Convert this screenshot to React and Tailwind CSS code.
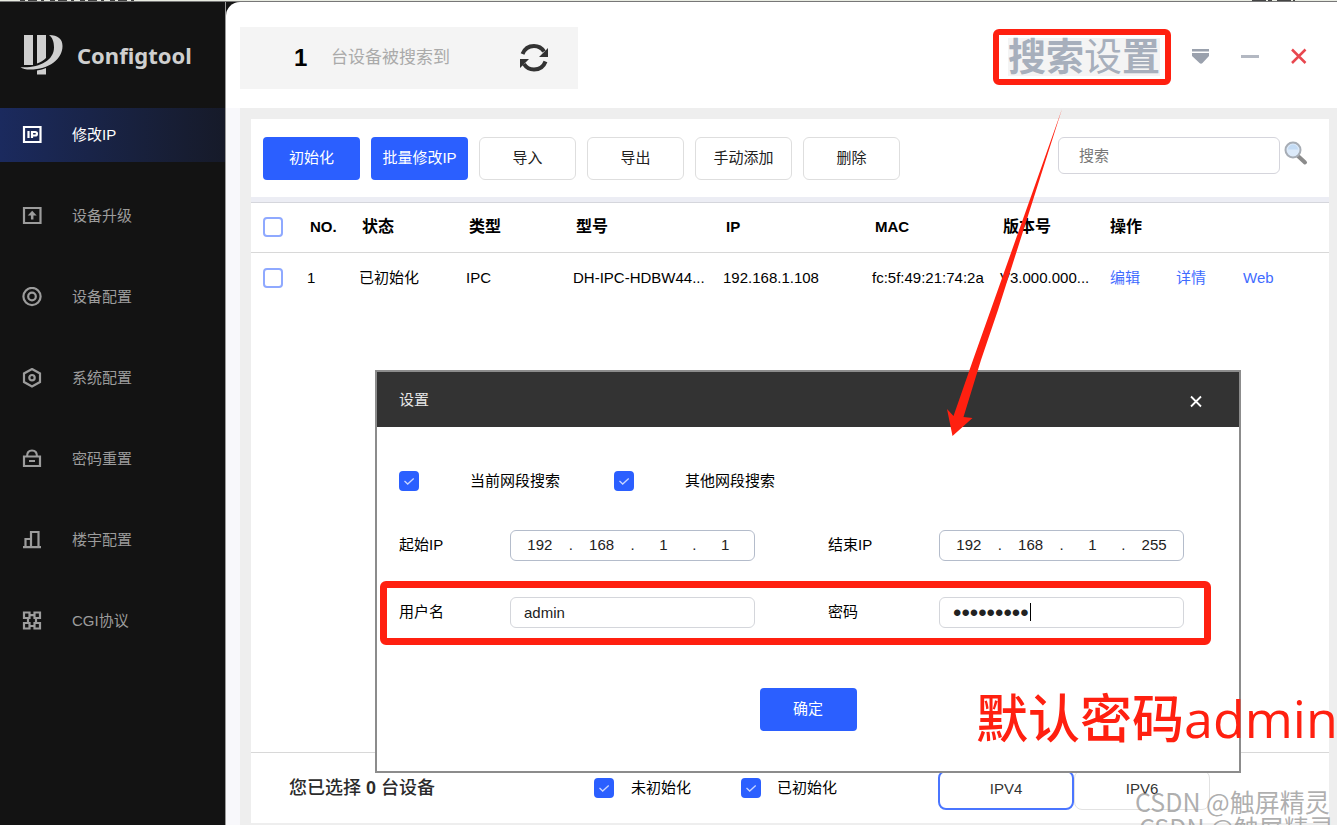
import React, { useState } from 'react';

const menuItems = [
    { key: 'ip', label: '修改IP' },
    { key: 'upgrade', label: '设备升级' },
    { key: 'device', label: '设备配置' },
    { key: 'system', label: '系统配置' },
    { key: 'password', label: '密码重置' },
    { key: 'building', label: '楼宇配置' },
    { key: 'cgi', label: 'CGI协议' },
];

const devices = [
    { no: 1, status: '已初始化', type: 'IPC', model: 'DH-IPC-HDBW44...', ip: '192.168.1.108', mac: 'fc:5f:49:21:74:2a', version: 'V3.000.000...' },
];

const MenuIcon = ({ name }) => {
    const common = { width: 20, height: 20, viewBox: '0 0 20 20', fill: 'none', stroke: 'currentColor', strokeWidth: 2.2, 'aria-hidden': true };
    switch (name) {
        case 'ip':
            return (
                <svg {...common}>
                    <path d="M2 2h16.500v15H2z" />
                    <path d="M6.500 6v7M10 13V7h3.200a1.500 1.500 0 0 1 0 3.500H10" />
                </svg>
            );
        case 'upgrade':
            return (
                <svg {...common}>
                    <path d="M2 2h16.500v15H2z" />
                    <path d="M10.200 13.500V8" strokeWidth="2.500" />
                    <path d="M5.700 9.500 10.200 4.800l4.500 4.700z" fill="currentColor" stroke="none" />
                </svg>
            );
        case 'device':
            return (
                <svg {...common}>
                    <circle cx="10" cy="9.500" r="8.600" />
                    <circle cx="10" cy="9.500" r="3.800" />
                </svg>
            );
        case 'system':
            return (
                <svg {...common}>
                    <path d="M10 1 18 5.500v8.500L10 18.500 2 14V5.500z" />
                    <circle cx="10" cy="9.700" r="2.700" />
                </svg>
            );
        case 'password':
            return (
                <svg {...common}>
                    <path d="M2 7.500h16V17H2zM5 7.500c0-4 2-6 5-6s5 2 5 6M7 12h6" />
                </svg>
            );
        case 'building':
            return (
                <svg {...common}>
                    <path d="M1 17.200h18M3.500 17V9H9v8M9 9.500V2h7.500v15" />
                </svg>
            );
        default:
            return (
                <svg {...common}>
                    <path d="M2 1.500h5.500v5.500H2zM12.500 1.500H18v5.500h-5.500zM2 12h5.500v5.500H2zM12.500 12H18v5.500h-5.500zM7 4.200h6M7 15h6M6 7v5M14 7v5" />
                </svg>
            );
    }
};

const Logo = () => (
    <svg width="43" height="41" viewBox="0 0 43 41" fill="#cfcfcf" aria-hidden="true">
        <path d="M4 0h9v30H4zM17 0h9v23c-2.500 2.400-5.500 4.300-9 5.500z" />
        <path d="M29 0c9 0 13.500 4 13.500 11C42.500 24 29 34.500 10 34.500c-4 0-7.500-.8-9.500-2.300C18 33.500 34 26 34 12.500 34 7 32.500 2.500 29 0z" />
        <path d="M17 35.500c3.500-.4 6.500-1.300 9-2.500v6.500h-9z" />
    </svg>
);

const RefreshIcon = () => (
    <svg width="30" height="30" viewBox="0 0 30 30" fill="none" stroke="#333" strokeWidth="4" aria-hidden="true">
        <path d="M3.500 11C5.500 6 10 3 15 3c4.300 0 7.800 2 10 5.500M26.500 18.500C24.500 24 20 26.500 15 26.500c-4.300 0-7.800-2-10-5.500" />
        <path d="M29 5v9H20zM1 25V16h9z" fill="#333" stroke="none" />
    </svg>
);

const SearchIcon = () => (
    <svg width="24" height="26" viewBox="0 0 24 26" aria-hidden="true">
        <path d="M14 15 21 21.500" stroke="#8b8b8b" strokeWidth="4" strokeLinecap="round" />
        <circle cx="9" cy="9" r="7.500" fill="#dceafa" stroke="#a7adb5" strokeWidth="2" />
        <path d="M4 8.500a5 5 0 0 1 10 0z" fill="#c4dcf5" />
    </svg>
);

const Checkbox = ({ id, label, defaultChecked = false }) => (
    <span className="inline-grid size-5 shrink-0 align-middle">
        <input
            id={id}
            type="checkbox"
            aria-label={label}
            defaultChecked={defaultChecked}
            className="peer [grid-area:1/1] size-5 appearance-none rounded-sm border-2 border-[#8fa9ff] bg-white checked:border-[#2b5fff] checked:bg-[#2b5fff]"
        />
        <svg viewBox="0 0 20 20" fill="none" stroke="#c9d6ff" className="[grid-area:1/1] pointer-events-none hidden size-5 peer-checked:block" aria-hidden="true">
            <path d="M5.500 10l3.200 3 6-5.500" strokeWidth="1.300" />
        </svg>
    </span>
);

const Sidebar = ({ active, onSelect }) => (
    <aside className="w-[226px] shrink-0 border-r border-[#9a9a9a] bg-[#131313]">
        <div className="flex h-[106px] items-center gap-[14px] pl-[20px]">
            <Logo />
            <span className="font-['Noto_Sans'] text-[22px] font-bold text-[#cfcfcf]">Configtool</span>
        </div>
        <nav className="flex flex-col gap-[27px]">
            {menuItems.map((item) => (
                <button
                    key={item.key}
                    type="button"
                    onClick={() => onSelect(item.key)}
                    className={`flex h-[54px] items-center gap-[30px] pl-[22px] text-left ${active === item.key ? 'bg-linear-to-r from-[#1b2a5e] to-[#161a29] text-white' : 'text-[#9c9c9c]'}`}
                >
                    <MenuIcon name={item.key} />
                    <span>{item.label}</span>
                </button>
            ))}
        </nav>
    </aside>
);

const Header = () => (
    <header className="flex h-[106px] items-start justify-between rounded-tl-[14px] bg-white pl-[14px] pr-[29px] pt-[25px]">
        <div className="flex h-[62px] w-[338px] items-center bg-[#f4f4f4] pl-[54px] pr-[29px]">
            <span className="w-[37px] text-2xl font-bold text-black">1</span>
            <span className="text-[17px] text-[#aaa]">台设备被搜索到</span>
            <button type="button" aria-label="刷新" className="ml-auto"><RefreshIcon /></button>
        </div>
        <div className="mt-[2px] flex h-14 items-center">
            <button type="button" className="flex h-14 w-[178px] items-center justify-center rounded-md border-6 border-[#ff2010] pl-1 text-[38px] font-bold text-[#a7afbc]">
                <span className="bg-[#f4f4f4] leading-[38px]">搜索<span className="font-normal">设</span>置</span>
            </button>
            <div className="ml-[21px] flex items-center gap-[31px]">
                <button type="button" aria-label="菜单">
                    <svg width="18" height="18" viewBox="0 0 18 18" fill="#9aa1ad" aria-hidden="true"><path d="M0 1h17v2.500H0zM0 5h17v3l-6.500 7q-1.500 1.500-3 0L0 8z" /></svg>
                </button>
                <button type="button" aria-label="最小化">
                    <svg width="18" height="18" viewBox="0 0 18 18" fill="#b3b8c2" aria-hidden="true"><path d="M0 7h18v3H0z" /></svg>
                </button>
                <button type="button" aria-label="关闭">
                    <svg width="18" height="18" viewBox="0 0 18 18" stroke="#e8474f" strokeWidth="2.500" aria-hidden="true"><path d="M2 1.500l13.500 13.500M15.500 1.500 2 15" /></svg>
                </button>
            </div>
        </div>
    </header>
);

const primaryBtn = "h-[43px] w-[97px] rounded-sm bg-[#2b5fff] text-white";
const plainBtn = "h-[43px] w-[97px] rounded-md border border-[#dedede] bg-white text-[#222]";

const Toolbar = () => (
    <div className="flex h-[78px] items-start bg-white pl-3 pr-[21px] pt-[18px]">
        <div className="flex gap-[11px]">
            <button type="button" className={primaryBtn}>初始化</button>
            <button type="button" className={primaryBtn}>批量修改IP</button>
            <button type="button" className={plainBtn}>导入</button>
            <button type="button" className={plainBtn}>导出</button>
            <button type="button" className={plainBtn}>手动添加</button>
            <button type="button" className={plainBtn}>删除</button>
        </div>
        <div className="ml-auto flex items-start gap-1">
            <input type="search" aria-label="搜索" placeholder="搜索" className="h-[37px] w-[222px] rounded-md border border-[#d5d5dc] px-5 outline-none placeholder:text-[#777]" />
            <button type="button" aria-label="搜索" className="mt-1"><SearchIcon /></button>
        </div>
    </div>
);

const DeviceTable = () => (
    <table className="w-full table-fixed text-left text-black">
        <colgroup>
            <col className="w-[56px]" />
            <col className="w-[52px]" />
            <col className="w-[107px]" />
            <col className="w-[107px]" />
            <col className="w-[150px]" />
            <col className="w-[149px]" />
            <col className="w-[128px]" />
            <col className="w-[110px]" />
            <col />
        </colgroup>
        <thead>
            <tr className="h-[49px] border-b border-[#d8d8d8] font-bold">
                <th className="pb-[2px] pl-3"><Checkbox label="全选" /></th>
                <th className="pl-[3px]">NO.</th>
                <th className="pl-[3px] text-base">状态</th>
                <th className="pl-[3px] text-base">类型</th>
                <th className="pl-[3px] text-base">型号</th>
                <th className="pl-[3px]">IP</th>
                <th className="pl-[3px]">MAC</th>
                <th className="pl-[3px] text-base">版本号</th>
                <th className="text-base">操作</th>
            </tr>
        </thead>
        <tbody>
            {devices.map((d) => (
                <tr key={d.no} className="h-[51px] whitespace-nowrap">
                    <td className="pb-[2px] pl-3"><Checkbox label={`选择设备 ${d.no}`} /></td>
                    <td>{d.no}</td>
                    <td>{d.status}</td>
                    <td>{d.type}</td>
                    <td>{d.model}</td>
                    <td>{d.ip}</td>
                    <td>{d.mac}</td>
                    <td>{d.version}</td>
                    <td>
                        <span className="flex text-[#3f6cff]">
                            <a href="#edit" className="w-[66px]">编辑</a>
                            <a href="#detail" className="w-[67px]">详情</a>
                            <a href="#web">Web</a>
                        </span>
                    </td>
                </tr>
            ))}
        </tbody>
    </table>
);

const Footer = () => (
    <footer className="flex h-[71px] items-center border-t border-[#d8d8d8] bg-white pl-[38px]">
        <p className="w-[305px] text-lg font-medium text-[#2b2b2b]">您已选择 <b>0</b> 台设备</p>
        <div className="flex w-[147px] items-center gap-[17px]">
            <Checkbox id="uninit" defaultChecked />
            <label htmlFor="uninit">未初始化</label>
        </div>
        <div className="flex w-[197px] items-center gap-4">
            <Checkbox id="inited" defaultChecked />
            <label htmlFor="inited">已初始化</label>
        </div>
        <div className="flex pt-[3px] text-[#333]">
            <button type="button" className="h-10 w-[136px] rounded-lg border-2 border-[#4a75ff] bg-white">IPV4</button>
            <button type="button" className="h-10 w-[136px] rounded-lg border border-[#e2e2e2] bg-white">IPV6</button>
        </div>
    </footer>
);

const IpField = ({ label, value }) => (
    <div role="group" aria-label={label} className="flex h-[31px] w-[245px] items-center rounded-md border border-[#b4bccb] bg-white text-[#222]">
        {value.map((part, i) => (
            <React.Fragment key={i}>
                {i > 0 && <span className="w-1">.</span>}
                <input aria-label={`${label} ${i + 1}`} defaultValue={part} className="min-w-0 flex-1 bg-transparent text-center outline-none" />
            </React.Fragment>
        ))}
    </div>
);

const SettingsDialog = () => {
    const inputClass = "h-[31px] w-[245px] rounded-md border border-[#d4d6db] bg-white px-[13px] text-[#222] outline-none";
    return (
        <section role="dialog" aria-label="设置" className="absolute left-[375px] top-[370px] w-[866px] border-2 border-[#8c8c8c] bg-white text-black">
            <div className="flex h-[55px] items-center justify-between bg-[#333] pl-[22px] pr-[36px] pt-[2px] text-[#e6e6e6]">
                <h2>设置</h2>
                <button type="button" aria-label="关闭设置">
                    <svg width="14" height="14" viewBox="0 0 14 14" stroke="#fff" strokeWidth="1.800" aria-hidden="true"><path d="M2 2.500l10 10M12 2.500l-10 10" /></svg>
                </button>
            </div>
            <form className="px-[22px] pb-[40px] pt-[44px]" onSubmit={(e) => e.preventDefault()}>
                <div className="flex">
                    <div className="flex w-[215px] items-center gap-[51px]">
                        <Checkbox id="current" defaultChecked />
                        <label htmlFor="current" className="leading-5">当前网段搜索</label>
                    </div>
                    <div className="flex items-center gap-[51px]">
                        <Checkbox id="other" defaultChecked />
                        <label htmlFor="other" className="leading-5">其他网段搜索</label>
                    </div>
                </div>
                <div className="mt-[39px] grid grid-cols-[111px_318px_111px_245px] items-center">
                    <span>起始IP</span>
                    <IpField label="起始IP" value={['192', '168', '1', '1']} />
                    <span>结束IP</span>
                    <IpField label="结束IP" value={['192', '168', '1', '255']} />
                </div>
                {/* Credentials, outlined to stand out */}
                <div className="relative mt-[36px] grid grid-cols-[111px_318px_111px_245px] items-center">
                    <label htmlFor="username">用户名</label>
                    <input id="username" defaultValue="admin" className={inputClass} />
                    <label htmlFor="secret">密码</label>
                    <span className="relative">
                        <input id="secret" type="password" defaultValue="admin1234" className={`${inputClass} text-2xl`} />
                        <span className="absolute left-[91px] top-[6px] h-[18px] w-px bg-black" aria-hidden="true"></span>
                    </span>
                    <span className="pointer-events-none absolute -left-[19px] -top-4 h-16 w-[831px] rounded-md border-7 border-[#ff2010]" aria-hidden="true"></span>
                </div>
                <div className="mt-[60px] flex justify-center">
                    <button type="submit" className={primaryBtn}>确定</button>
                </div>
            </form>
        </section>
    );
};

const App = () => {
    const [active, setActive] = useState('ip');

    return (
        <div className="relative flex min-h-screen flex-col overflow-hidden bg-[#131313] font-['Liberation_Sans','Noto_Sans_CJK_SC',sans-serif] text-[15px]">
            {/* Edge of the page behind the window */}
            <div className="flex h-[2px] justify-between border-b border-[#777] bg-[#e9ece2] pl-5 pr-[42px]">
                <svg width="116" height="1" stroke="#444" strokeWidth="2" aria-hidden="true"><path d="M0 .5h116" strokeDasharray="5 3 9 4 3 6" /></svg>
                <svg width="43" height="1" stroke="#444" strokeWidth="2" aria-hidden="true"><path d="M0 .5h43" strokeDasharray="14 2 4 5" /></svg>
            </div>
            <div className="flex flex-1">
                <Sidebar active={active} onSelect={setActive} />
                <div className="flex min-w-0 flex-1 flex-col">
                    <Header />
                    <main className="flex flex-1 flex-col bg-[#f8f8fb] pl-[14px]">
                        <div className="flex flex-1 flex-col bg-[#eee] pb-[2px] pl-[11px] pr-2 pt-[11px]">
                            <Toolbar />
                            <div className="h-[6px] border-b border-[#d5d6dc] bg-[#ecedf4]"></div>
                            <div className="flex-1 bg-white">
                                <DeviceTable />
                            </div>
                            <Footer />
                        </div>
                    </main>
                </div>
            </div>

            <SettingsDialog />

            {/* Notes on top of the window */}
            <svg width="120" height="330" viewBox="0 0 120 330" className="pointer-events-none absolute left-[945px] top-[108px]" aria-hidden="true">
                <path d="M117 1 28 252 8.500 308 2 301l5.500 27 20-18-9-1L36 252 53 202z" fill="#ff2010" />
            </svg>
            <p className="pointer-events-none absolute left-[976px] top-[682px] whitespace-nowrap font-['Open_Sans','Noto_Sans_CJK_SC',sans-serif] text-[52px] font-medium leading-[72px] text-[#ff2010]">默认密码admin</p>
            <div className="pointer-events-none absolute left-[1135px] top-[788px] whitespace-nowrap font-['Noto_Sans_CJK_SC',sans-serif] text-[25px] leading-[26px] text-[#8c8c8c]/70" aria-hidden="true">
                <p>CSDN @触屏精灵</p>
                <p className="pl-1">CSDN @触屏精灵</p>
            </div>
        </div>
    );
};

export default App;
